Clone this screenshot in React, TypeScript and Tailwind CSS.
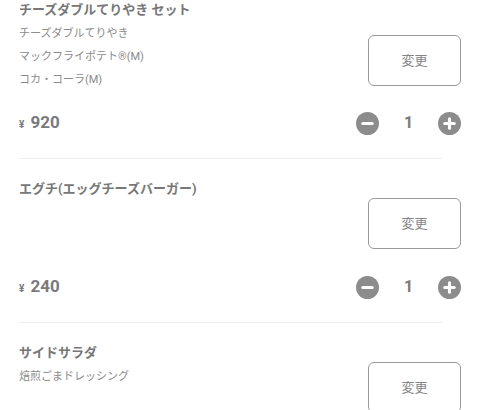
import React from 'react'

type Item = {
  name: string
  options: string[]
  price: number
  qty: number
  topPad: string
  btnTop: string
  priceTop: string
}

const items: Item[] = [
  {
    name: 'チーズダブルてりやき セット',
    options: ['チーズダブルてりやき', 'マックフライポテト®(M)', 'コカ・コーラ(M)'],
    price: 920,
    qty: 1,
    topPad: 'pt-0',
    btnTop: 'mt-[35px]',
    priceTop: 'mt-[20px]',
  },
  {
    name: 'エグチ(エッグチーズバーガー)',
    options: [],
    price: 240,
    qty: 1,
    topPad: 'pt-[20px]',
    btnTop: 'mt-[19px]',
    priceTop: 'mt-[26px]',
  },
  {
    name: 'サイドサラダ',
    options: ['焙煎ごまドレッシング'],
    price: 280,
    qty: 1,
    topPad: 'pt-[20px]',
    btnTop: 'mt-[19px]',
    priceTop: 'mt-[26px]',
  },
]

function MinusIcon() {
  return (
    <svg width="23" height="23" viewBox="0 0 24 24">
      <circle cx="12" cy="12" r="12" fill="#8c8c8c" />
      <rect x="5.5" y="10.4" width="13" height="3.2" rx="1.6" fill="#fff" />
    </svg>
  )
}

function PlusIcon() {
  return (
    <svg width="23" height="23" viewBox="0 0 24 24">
      <circle cx="12" cy="12" r="12" fill="#8c8c8c" />
      <rect x="5.5" y="10.4" width="13" height="3.2" rx="1.6" fill="#fff" />
      <rect x="10.4" y="5.5" width="3.2" height="13" rx="1.6" fill="#fff" />
    </svg>
  )
}

function CartItem({ item }: { item: Item }) {
  return (
    <li className={`pl-[19px] pr-[19px] ${item.topPad}`}>
      {/* Name, options and change button */}
      <div className="flex items-start justify-between">
        <div className="flex flex-col">
          <p className="text-[13px] font-bold leading-[20px] text-[#777777]">{item.name}</p>
          {item.options.length > 0 ? (
            <div className="mt-[2px] flex flex-col">
              {item.options.map((o) => (
                <p key={o} className="text-[11px] leading-[23px] text-[#8a8a8a]">
                  {o}
                </p>
              ))}
            </div>
          ) : null}
        </div>
        <button
          className={`${item.btnTop} flex h-[51px] w-[93px] items-center justify-center rounded-[6px] border border-[#9a9a9a] bg-white text-[13px] text-[#858585]`}
        >
          変更
        </button>
      </div>

      {/* Price and quantity */}
      <div className={`${item.priceTop} flex h-[24px] items-center justify-between`}>
        <p className="flex items-baseline text-[#7a7a7a]">
          <span className="text-[10px] font-bold">¥</span>
          <span className="ml-[6px] text-[17px] font-bold">{item.price}</span>
        </p>
        <div className="flex items-center">
          <MinusIcon />
          <span className="w-[59px] text-center text-[16px] font-bold text-[#7a7a7a]">{item.qty}</span>
          <PlusIcon />
        </div>
      </div>

      <div className="mr-[19px] mt-[23px] border-b border-[#eeeeee]" />
    </li>
  )
}

export default function App() {
  return (
    <div
      className="h-[410px] w-[480px] overflow-hidden bg-white"
      style={{ fontFamily: 'Roboto, "Noto Sans CJK JP", sans-serif' }}
    >
      <ul>
        {items.map((item) => (
          <CartItem key={item.name} item={item} />
        ))}
      </ul>
    </div>
  )
}
